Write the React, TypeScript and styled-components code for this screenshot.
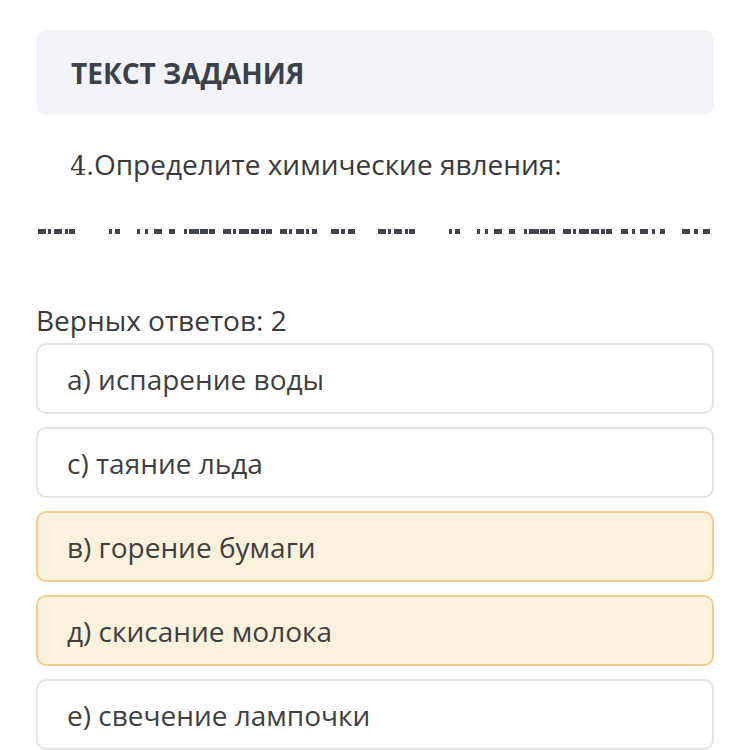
import React from "react";
import styled, { createGlobalStyle } from "styled-components";

const Global = createGlobalStyle`
  html, body { margin: 0; padding: 0; background: #ffffff; }
  body { font-family: "Open Sans", "Noto Sans", sans-serif; }
`;

const Page = styled.div`
  width: 750px;
  height: 750px;
  overflow: hidden;
  box-sizing: border-box;
  padding: 30px 36px 0 36px;
  display: flex;
  flex-direction: column;
`;

const Header = styled.div`
  height: 85px;
  flex-shrink: 0;
  background: #f2f3f6;
  border-radius: 10px;
  display: flex;
  align-items: center;
  padding-left: 35px;
  box-sizing: border-box;
`;

const HeaderTitle = styled.h2`
  margin: 0;
  font-size: 28px;
  font-weight: 700;
  color: #3c4049;
`;

const Question = styled.div`
  margin-top: 29px;
  padding-left: 34px;
  font-size: 28px;
  color: #3a3a3a;
  line-height: 40px;
  flex-shrink: 0;
`;

const Num = styled.span`
  font-family: "DejaVu Serif", "Liberation Serif", serif;
  font-size: 26px;
`;

const Cut = styled.svg`
  display: block;
  flex-shrink: 0;
  margin-top: 41px;
  width: 678px;
  height: 8px;
`;

const Count = styled.div`
  margin-top: 67px;
  font-size: 28px;
  color: #3a3a3a;
  line-height: 36px;
  flex-shrink: 0;
`;

const Options = styled.div`
  margin-top: 5px;
  display: flex;
  flex-direction: column;
  gap: 13px;
`;

const Option = styled.div<{ $selected?: boolean }>`
  height: 71px;
  box-sizing: border-box;
  border-radius: 10px;
  border: 2px solid ${(p) => (p.$selected ? "#f2d08c" : "#e4e4e4")};
  background: ${(p) => (p.$selected ? "#fbf2dd" : "#ffffff")};
  display: flex;
  align-items: center;
  padding-left: 29px;
  flex-shrink: 0;
`;

const OptionText = styled.span`
  font-size: 28px;
  color: #3f3f3f;
  white-space: nowrap;
`;

// dash segments approximating the clipped line of text (local coords, repeated twice)
const pattern: [number, number][] = [
  [4, 8], [14, 3], [20, 8], [31, 3], [35, 6],
  [75, 3], [81, 5],
  [103, 3], [111, 3], [120, 8], [135, 6],
  [150, 3], [155, 10], [166, 8], [175, 6],
  [189, 8], [199, 3],
  [205, 10], [217, 8], [227, 4], [232, 6],
  [246, 7], [255, 3],
  [262, 8], [272, 3], [278, 5],
  [297, 8], [307, 4], [314, 7],
];

const segments = [0, 1].flatMap((copy) =>
  pattern.map(([x, w]) => {
    const off = copy * 340 - 2;
    const stretch = copy === 1 && x > 240 ? Math.round((x - 240) * 0.2) : 0;
    return [x + off + stretch, w] as [number, number];
  })
);

const options = [
  { text: "а) испарение воды", selected: false },
  { text: "с) таяние льда", selected: false },
  { text: "в) горение бумаги", selected: true },
  { text: "д) скисание молока", selected: true },
  { text: "е) свечение лампочки", selected: false },
];

export default function App() {
  return (
    <>
      <Global />
      <Page>
        <Header>
          <HeaderTitle>ТЕКСТ ЗАДАНИЯ</HeaderTitle>
        </Header>
        <Question>
          <Num>4</Num>.Определите химические явления:
        </Question>
        <Cut viewBox="0 0 678 8">
          {segments.map(([x, w], i) => (
            <rect key={i} x={x} y={2} width={w} height={5} fill="#3f434b" />
          ))}
        </Cut>
        <Count>Верных ответов: 2</Count>
        <Options>
          {options.map((o) => (
            <Option key={o.text} $selected={o.selected}>
              <OptionText>{o.text}</OptionText>
            </Option>
          ))}
        </Options>
      </Page>
    </>
  );
}
